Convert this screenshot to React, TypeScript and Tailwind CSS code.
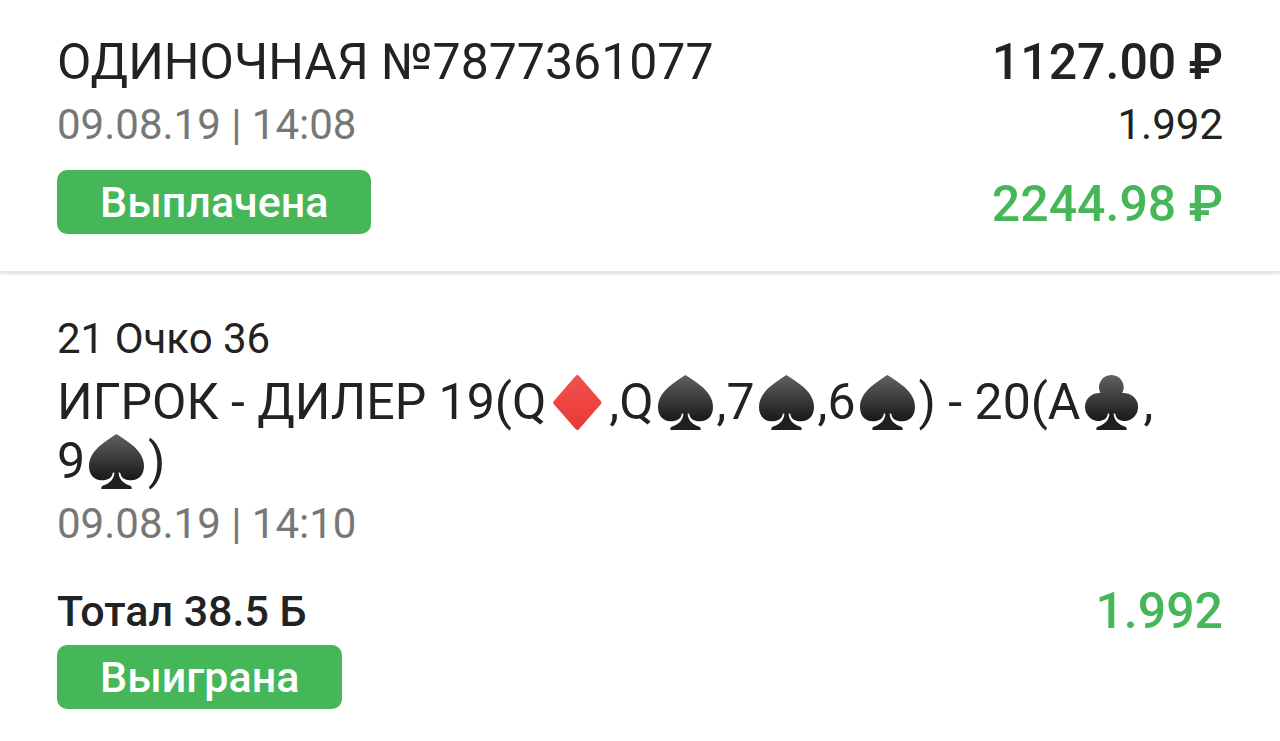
import React from "react";

type SuitName = "diamond" | "spade" | "club";

const suitPaths: Record<SuitName, string> = {
  diamond: "M82 0 Q85 0 88 4 L153 79 Q156 83 153 87 L88 161 Q85 165 82 165 Q79 165 76 161 L11 87 Q8 83 11 79 L76 4 Q79 0 82 0Z",
  spade:
    "M82 0 C97 9 117 22 134 37 C153 54 165 73 165 97 C165 123 149 139 127 139 C107 139 91 129 82 113 C73 129 57 139 37 139 C16 139 0 123 0 97 C0 73 12 54 31 37 C48 22 68 9 82 0Z",
  club:
    "M82 0 A37 37 0 0 1 115 54 A42 42 0 1 1 125 138 C106 138 91 129 82 113 C73 129 58 138 41 138 A42 42 0 1 1 49 54 A37 37 0 0 1 82 0Z",
};

const stemPath = "M77 112 H88 C89 134 101 149 124 155 Q128 157 128 161 V165 H37 V161 Q37 157 41 155 C64 149 76 134 77 112Z";

function Suit({ name, id }: { name: SuitName; id: string }) {
  const red = name === "diamond";
  return (
    <svg role="img" aria-label={name} viewBox="0 0 165 165" className="mx-1 -my-3 inline-block size-[55px] align-[1px]">
      <defs>
        <linearGradient id={id} x1="0" y1="0" x2="0" y2="165" gradientUnits="userSpaceOnUse">
          <stop offset="0" stopColor={red ? "#ef5350" : "#616161"} />
          <stop offset={red ? "0.5" : "0.8"} stopColor={red ? "#f04440" : "#1c1c1c"} />
          <stop offset="1" stopColor={red ? "#e53935" : "#1c1c1c"} />
        </linearGradient>
      </defs>
      <path d={suitPaths[name]} fill={`url(#${id})`} />
      {!red && (
        <>
          <path d="M75 116 C72 132 61 144 38 150 M90 116 C93 132 104 144 127 150" fill="none" stroke="white" strokeWidth="6" />
          <path d={stemPath} fill="#1f1f1f" />
        </>
      )}
    </svg>
  );
}

function Badge({ children }: { children: React.ReactNode }) {
  return <span className="inline-block rounded-[10px] bg-[#46b758] px-[43px] text-[43px] leading-[64px] font-medium text-white">{children}</span>;
}

export default function App() {
  return (
    <main className="min-h-screen bg-white font-['Roboto',sans-serif] text-[#222]">
      <header className="flex justify-between border-b-2 border-[#e8e8e8] px-[57px] pt-8 pb-[33px] shadow-sm">
        <div>
          <h1 className="text-[50px] leading-[60px]">ОДИНОЧНАЯ №7877361077</h1>
          <p className="mb-3 text-[42px] leading-[66px] text-[#777]">09.08.19 | 14:08</p>
          <Badge>Выплачена</Badge>
        </div>
        <div className="text-right">
          <p className="text-[50px] leading-[60px] font-medium">1127.00 ₽</p>
          <p className="mb-3 text-[42px] leading-[66px]">1.992</p>
          <p className="text-[50px] leading-[68px] font-medium text-[#46b758]">2244.98 ₽</p>
        </div>
      </header>
      <section className="px-[57px] pt-9">
        <p className="mb-1 text-[42px] leading-[60px]">21 Очко 36</p>
        <h2 className="text-[50px] leading-[59px]">
          ИГРОК - ДИЛЕР 19(Q<Suit name="diamond" id="d1" />,Q<Suit name="spade" id="s1" />,7<Suit name="spade" id="s2" />,6<Suit name="spade" id="s3" />) - 20(A<Suit name="club" id="c1" />,<br />9<Suit name="spade" id="s4" />)
        </h2>
        <p className="text-[42px] leading-[66px] text-[#777]">09.08.19 | 14:10</p>
        <div className="mt-5 flex items-center justify-between leading-[68px] font-medium">
          <h3 className="text-[43px]">Тотал 38.5 Б</h3>
          <p className="text-[50px] text-[#46b758]">1.992</p>
        </div>
        <Badge>Выиграна</Badge>
      </section>
    </main>
  );
}
